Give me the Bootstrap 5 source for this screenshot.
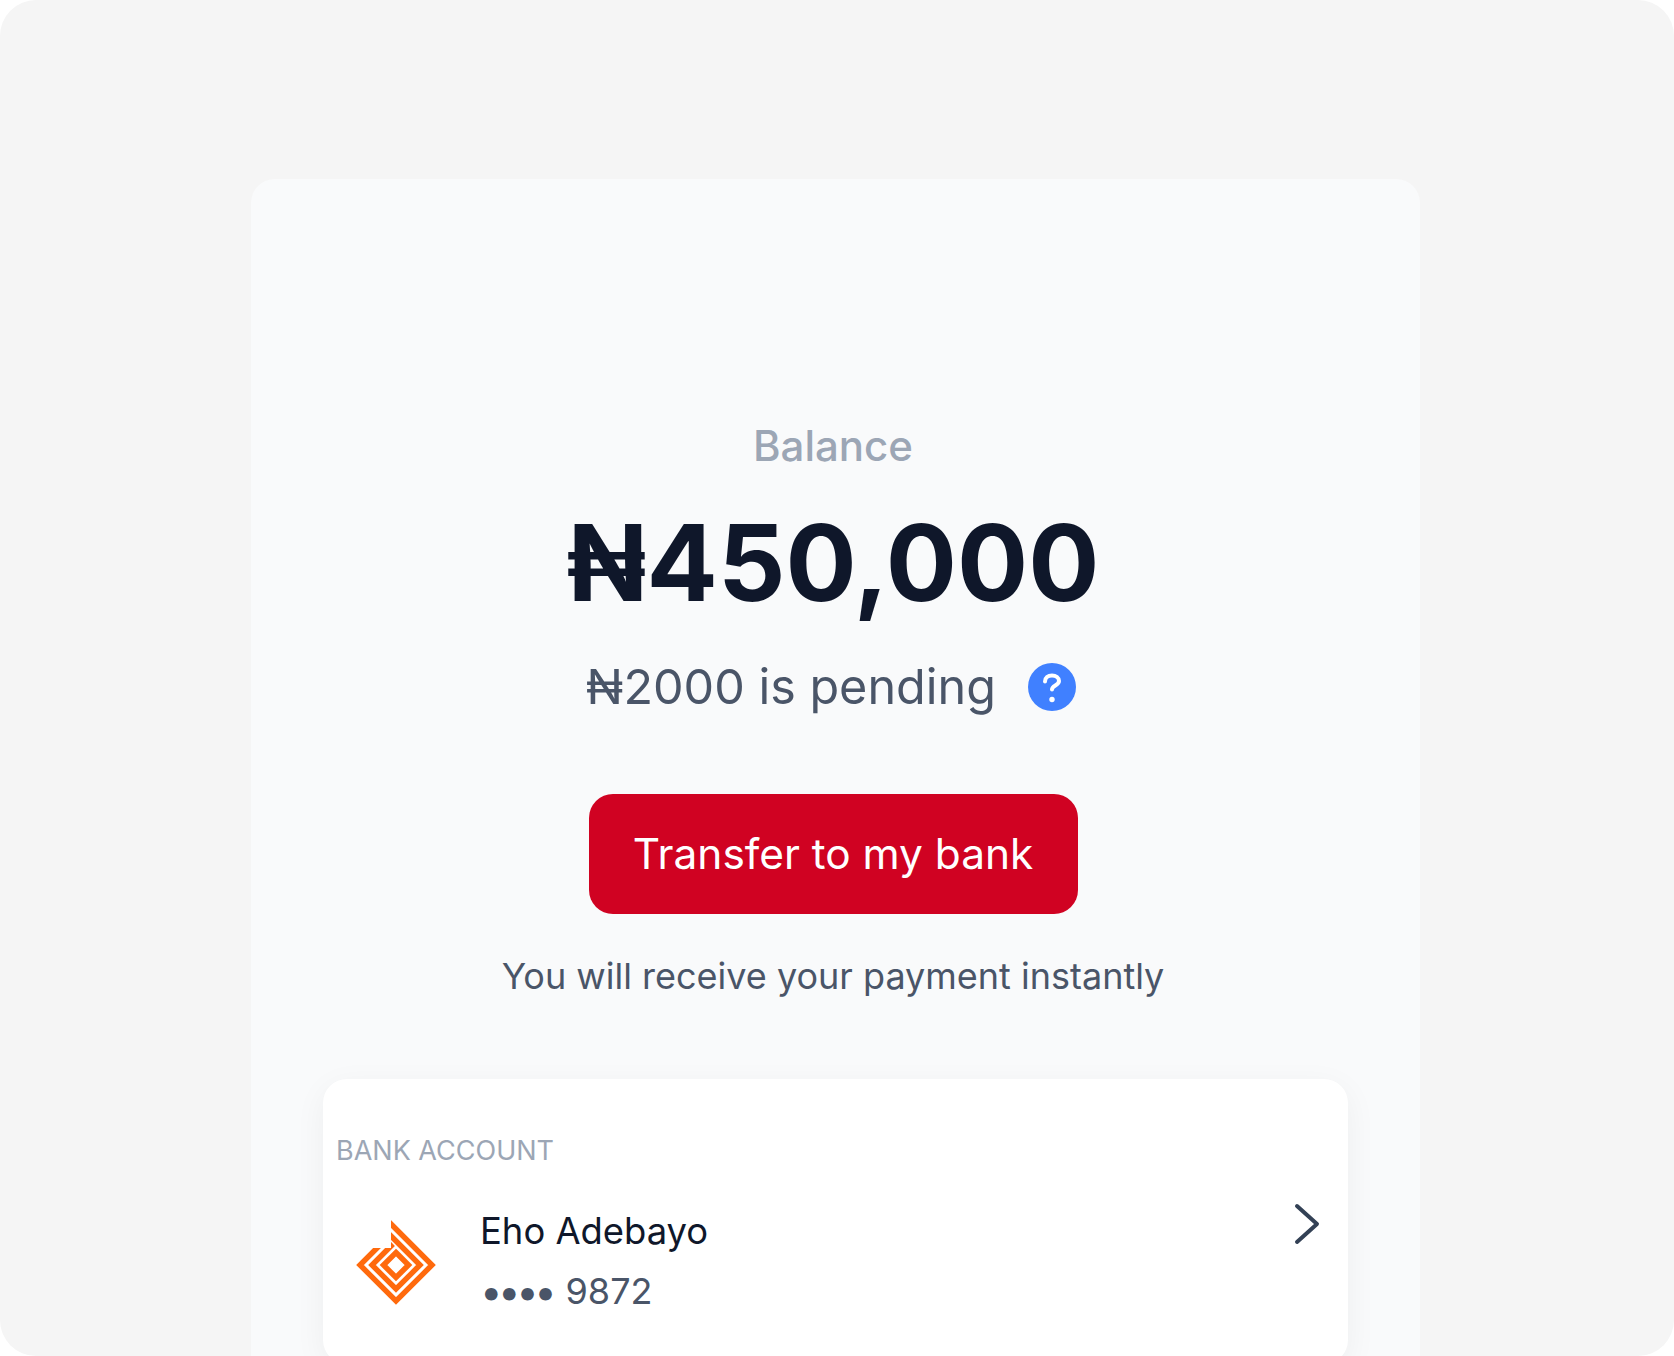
<!DOCTYPE html>
<html lang="en">
<head>
    <meta charset="UTF-8">
    <title>Balance</title>
    <link href="https://cdn.jsdelivr.net/npm/bootstrap@5.3.3/dist/css/bootstrap.min.css" rel="stylesheet">
    <style>
        html, body { height: 100%; background: #fff; }
        body { font-family: Inter, "Noto Sans", sans-serif; overflow: hidden; }
        .frame { height: 1356px; background: #f5f5f5; border-radius: 36px; overflow: hidden; padding: 179px 254px 0 251px; }
        .panel { height: 1300px; background: #f9fafb; border-radius: 24px; padding: 240px 72px 0; }
        .bal-top { padding-right: 5px; }
        .bal-label { font-size: 42px; line-height: 54px; font-weight: 500; color: #9ca6b5; }
        .bal-amount { font-size: 105.6px; line-height: 136px; font-weight: 700; color: #0f172a; margin-top: 22px; }
        .bal-pending { font-size: 48.5px; line-height: 60px; color: #4a5568; margin-top: 26px; padding-right: 4px; gap: 32px; }
        .btn-transfer { width: 489px; height: 120px; font-size: 42.4px; color: #fff; background: #d00222; border: 0; border-radius: 24px; margin-top: 77px; }
        .btn-transfer:hover { color: #fff; background: #b8011d; }
        .bal-note { font-size: 36px; line-height: 48px; color: #4a5568; margin-top: 38px; }
        .bank-card { height: 285px; margin-top: 79px; background: #fff; border-radius: 24px; padding: 54px 28px 0 13px; box-shadow: 0 8px 32px rgba(15, 23, 42, .05); }
        .bank-title { font-size: 27px; line-height: 36px; color: #9ca6b5; }
        .bank-row { margin-top: 30px; padding-left: 14px; }
        .bank-logo { margin-top: 16px; }
        .bank-arrow { margin-top: 4px; }
        .bank-text { margin-left: 30px; }
        .bank-name { font-size: 36.4px; line-height: 48px; color: #0f172a; }
        .bank-num { font-size: 36px; line-height: 48px; color: #4a5568; margin-top: 12px; }
        .bank-dots { font-size: 40px; line-height: 0; letter-spacing: -4.4px; margin-right: 3px; vertical-align: -2px; }
    </style>
</head>
<body>
    <div class="frame">
        <div class="panel">
            <div class="bal-top text-center">
                <div class="bal-label">Balance</div>
                <div class="bal-amount">₦450,000</div>
                <div class="bal-pending d-flex justify-content-center align-items-center">
                    <span>₦2000 is pending</span>
                    <svg width="48" height="48" viewBox="0 0 48 48">
                        <circle cx="24" cy="24" r="24" fill="#4080ff"/>
                        <path d="M17 18.500c0-3.600 3-6 7-6s7 2.400 7 5.500c0 4.500-7 4.500-7 8.500" fill="none" stroke="#fff" stroke-width="4" stroke-linecap="round"/>
                        <circle cx="24" cy="36.500" r="2.700" fill="#fff"/>
                    </svg>
                </div>
                <button type="button" class="btn btn-transfer">Transfer to my bank</button>
                <div class="bal-note">You will receive your payment instantly</div>
            </div>
            <div class="bank-card">
                <div class="bank-title text-uppercase">Bank account</div>
                <div class="bank-row d-flex">
                    <svg class="bank-logo flex-shrink-0" width="100" height="100" viewBox="0 0 100 100">
                        <defs>
                            <clipPath id="logoClip"><polygon points="41,0 100,0 100,100 0,100 0,33 41,33"/></clipPath>
                        </defs>
                        <g fill="none" stroke="#ff6a0d" stroke-width="5.400" clip-path="url(#logoClip)">
                            <polyline points="35,3 82,50 46,86 10,50 32,28"/>
                            <polyline points="36,16 70,50 46,74 22,50 43,29"/>
                            <polygon points="46,37.500 58.500,50 46,62.500 33.500,50"/>
                        </g>
                    </svg>
                    <div class="bank-text">
                        <div class="bank-name mt-2">Eho Adebayo</div>
                        <div class="bank-num"><span class="bank-dots">••••</span> 9872</div>
                    </div>
                    <svg class="bank-arrow ms-auto flex-shrink-0" width="26" height="42" viewBox="0 0 26 42">
                        <path d="M3 3l20 18-20 18" fill="none" stroke="#334155" stroke-width="4" stroke-linecap="round" stroke-linejoin="round"/>
                    </svg>
                </div>
            </div>
        </div>
    </div>
    <script src="https://cdn.jsdelivr.net/npm/bootstrap@5.3.3/dist/js/bootstrap.bundle.min.js"></script>
</body>
</html>
